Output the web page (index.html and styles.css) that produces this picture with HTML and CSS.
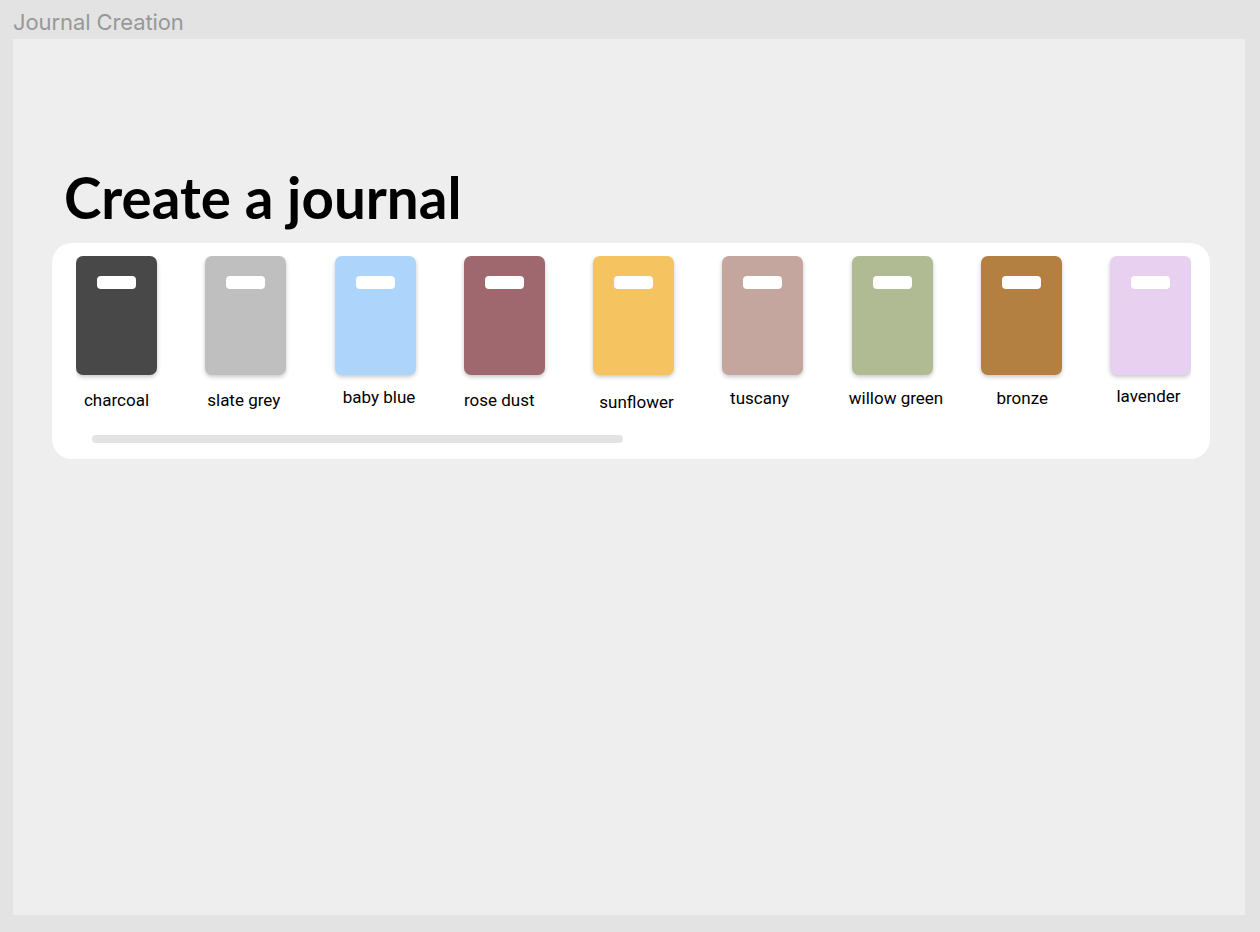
FILE: index.html
```html
<!DOCTYPE html>
<html>
<head>
<meta charset="utf-8">
<link rel="stylesheet" href="styles.css">
</head>
<body>
<div class="app">
  <div class="window-title">Journal Creation</div>
  <main class="frame">
    <h1 class="heading">Create a journal</h1>
    <section class="picker">
      <div class="swatch-row">
        <div class="option"><div class="cover charcoal"><span class="handle"></span></div><span class="label">charcoal</span></div>
        <div class="option"><div class="cover slate"><span class="handle"></span></div><span class="label shift-slate">slate grey</span></div>
        <div class="option"><div class="cover baby"><span class="handle"></span></div><span class="label shift-baby">baby blue</span></div>
        <div class="option"><div class="cover rose"><span class="handle"></span></div><span class="label shift-rose">rose dust</span></div>
        <div class="option"><div class="cover sun"><span class="handle"></span></div><span class="label shift-sun">sunflower</span></div>
        <div class="option"><div class="cover tuscany"><span class="handle"></span></div><span class="label shift-tuscany">tuscany</span></div>
        <div class="option"><div class="cover willow"><span class="handle"></span></div><span class="label shift-willow">willow green</span></div>
        <div class="option"><div class="cover bronze"><span class="handle"></span></div><span class="label shift-bronze">bronze</span></div>
        <div class="option"><div class="cover lavender"><span class="handle"></span></div><span class="label shift-lavender">lavender</span></div>
      </div>
      <div class="scrollbar"><div class="thumb"></div></div>
    </section>
  </main>
</div>
</body>
</html>
```
FILE: styles.css
```css
* { box-sizing: border-box; }
html, body { margin: 0; padding: 0; }
body {
  background: #e3e3e3;
  width: 1260px;
  height: 932px;
  overflow: hidden;
}
.app {
  padding: 0 15px 0 13px;
}
.window-title {
  font-family: Inter, "Liberation Sans", sans-serif;
  font-size: 22px;
  line-height: 26px;
  color: #989898;
  padding-top: 9px;
  height: 39px;
  letter-spacing: -0.1px;
}
.frame {
  background: #eeeeee;
  width: 1232px;
  height: 876px;
  padding: 125px 35px 0 39px;
}
.heading {
  margin: 0 0 13px 12px;
  font-family: Lato, "Noto Sans", sans-serif;
  font-weight: 700;
  font-size: 56.5px;
  line-height: 66px;
  color: #000;
}
.picker {
  background: #fff;
  border-radius: 20px;
  height: 216px;
  padding: 13px 19px 0 24px;
  overflow: hidden;
}
.swatch-row {
  display: flex;
  gap: 48.25px;
  overflow: hidden;
  height: 169px;
  padding-bottom: 6px;
}
.option {
  flex: 0 0 81px;
  width: 81px;
  min-width: 0;
  display: flex;
  flex-direction: column;
  align-items: center;
}
.cover {
  width: 81px;
  height: 119px;
  border-radius: 7px;
  box-shadow: 0 2px 4px rgba(0,0,0,0.22);
  display: flex;
  justify-content: center;
  padding-top: 20px;
}
.handle {
  width: 39px;
  height: 13px;
  border-radius: 4px;
  background: #fff;
}
.label {
  margin-top: 15px;
  font-family: Roboto, "Liberation Sans", sans-serif;
  font-size: 17px;
  line-height: 20px;
  color: #000;
  white-space: nowrap;
}
.shift-slate { margin-left: -2px; margin-right: 2px; }
.shift-baby { margin-top: 12px; margin-left: 4px; margin-right: -4px; }
.shift-rose { margin-left: -5px; margin-right: 5px; }
.shift-sun { margin-top: 17px; margin-left: 3px; margin-right: -3px; }
.shift-tuscany { margin-top: 13px; margin-left: -3px; margin-right: 3px; }
.shift-willow { margin-top: 13px; margin-left: 4px; margin-right: -4px; }
.shift-bronze { margin-top: 13px; margin-left: 1px; margin-right: -1px; }
.shift-lavender { margin-top: 11px; margin-left: -2px; margin-right: 2px; }
.charcoal { background: #484848; }
.slate { background: #bfbfbf; }
.baby { background: #add5fb; }
.rose { background: #9e686e; }
.sun { background: #f5c360; }
.tuscany { background: #c4a69f; }
.willow { background: #b0bb93; }
.bronze { background: #b38042; }
.lavender { background: #e8d1f0; }
.scrollbar {
  margin: 10px 0 0 16px;
  height: 8px;
}
.thumb {
  width: 531px;
  height: 8px;
  border-radius: 4px;
  background: #e3e3e3;
}
```
